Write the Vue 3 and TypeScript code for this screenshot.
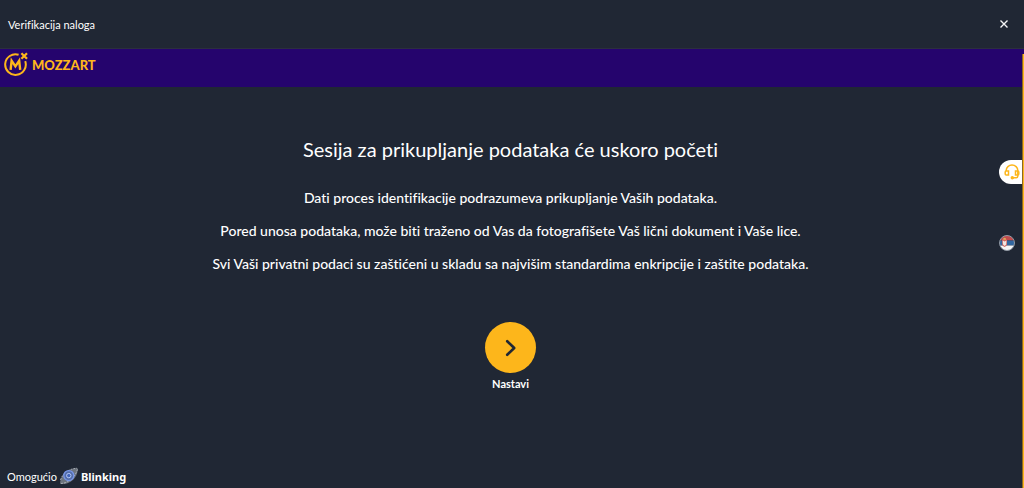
<script setup lang="ts">
const paragraphs: string[] = [
  'Dati proces identifikacije podrazumeva prikupljanje Vaših podataka.',
  'Pored unosa podataka, može biti traženo od Vas da fotografišete Vaš lični dokument i Vaše lice.',
  'Svi Vaši privatni podaci su zaštićeni u skladu sa najvišim standardima enkripcije i zaštite podataka.',
]
</script>

<template>
  <div class="page">
    <header class="topbar">
      <span>Verifikacija naloga</span>
      <button class="close" type="button" aria-label="Zatvori">
        <svg width="10" height="10" viewBox="0 0 10 10"><path d="M1.5 1.5 8.5 8.5M8.5 1.5 1.5 8.5" fill="none" stroke="#f4f5f6" stroke-width="1.4" /></svg>
      </button>
    </header>

    <div class="brand">
      <svg width="24" height="25" viewBox="0 0 24 25" fill="none" stroke="#fdb61b">
        <path d="M14.6 2.8A10.3 10.3 0 1 0 21.2 9.2" stroke-width="2" />
        <path d="M6.6 17.8 7.6 8.6 11.4 14.4 15.2 8.6 16.2 17.8" stroke-width="2.4" />
        <path d="M17.4 1.2 23 6.8M23 1.2 17.4 6.8" stroke-width="2.3" />
      </svg>
      <span class="wordmark">MOZZART</span>
    </div>

    <main class="content">
      <h1>Sesija za prikupljanje podataka će uskoro početi</h1>
      <p v-for="text in paragraphs" :key="text">{{ text }}</p>
      <button class="next" type="button">
        <span class="circle">
          <svg width="12" height="18" viewBox="0 0 12 18"><path d="M2.2 2.2 9.2 9 2.2 15.8" fill="none" stroke="#202734" stroke-width="2.6" stroke-linecap="round" stroke-linejoin="round" /></svg>
        </span>
        <span>Nastavi</span>
      </button>
    </main>

    <footer class="footer">
      <span>Omogućio</span>
      <svg width="20" height="18" viewBox="0 0 20 18">
        <path d="M1 16.8C1 10 6 2.5 18.5 1 19.5 7 15 15 6 17Z" fill="#6d747e" />
        <path d="M1.5 13C4 6 9 2 18 1.2M2 16.5C9 16 16 11 18.6 2" fill="none" stroke="#a7adb4" stroke-width="1" stroke-dasharray="2 1" />
        <circle cx="9.8" cy="8.6" r="5" fill="#536da9" stroke="#7795e8" stroke-width="1.3" />
        <circle cx="9.8" cy="8.6" r="2.2" fill="#4265bc" stroke="#b6c7f4" stroke-width="1" />
      </svg>
      <strong>Blinking</strong>
    </footer>

    <button class="support" type="button" aria-label="Podrška">
      <svg width="16" height="16" viewBox="0 0 16 16" fill="none" stroke="#fdb61b" stroke-width="1.5">
        <path d="M2.2 7V6.5a5.8 5.5 0 0 1 11.6 0V12.2a1.6 1.6 0 0 1-1.6 1.5H9" />
        <path d="M4.5 7H2.2a1 1 0 0 0-1 1v2a1 1 0 0 0 1 1H4.5ZM11.5 7h2.3a1 1 0 0 1 1 1v2a1 1 0 0 1-1 1H11.5Z" />
        <circle cx="8.3" cy="13.8" r="1" fill="#fdb61b" />
      </svg>
    </button>
    <button class="language" type="button" aria-label="Srpski">
      <svg width="16" height="16" viewBox="0 0 16 16">
        <defs><clipPath id="flag"><circle cx="8" cy="8" r="7.4" /></clipPath></defs>
        <g clip-path="url(#flag)">
          <path d="M0 0H16V5.4H0Z" fill="#c34c4d" />
          <path d="M0 5.4H16V10.6H0Z" fill="#31669f" />
          <path d="M0 10.6H16V16H0Z" fill="#f5f5f5" />
          <path d="M3.2 4.6H8V9.5Q7.6 11.2 5.6 12 3.6 11.2 3.2 9.5Z" fill="#d4665f" />
          <path d="M3.7 5.6 5.6 6.6 7.5 5.6 7.2 9.6 5.6 11 4 9.6Z" fill="#f1e7e2" />
          <path d="M4.2 4.8V3L5 3.6 5.6 2.6 6.2 3.6 7 3V4.8Z" fill="#dfb05a" />
        </g>
        <circle cx="8" cy="8" r="7.5" fill="none" stroke="#929aa5" />
      </svg>
    </button>
    <div class="edge"></div>
  </div>
</template>

<style>
body {
  margin: 0;
  background: #202734;
}
</style>

<style scoped>
.page {
  position: relative;
  display: flex;
  flex-direction: column;
  min-height: 100vh;
  background: #202734;
  color: #fff;
  font-family: Lato, "Liberation Sans", sans-serif;
  font-size: 14px;
  font-variant-ligatures: none;
}
button {
  border: 0;
  padding: 0;
  background: none;
  color: inherit;
  font: inherit;
  cursor: pointer;
}
svg {
  display: block;
}
.topbar {
  display: flex;
  align-items: center;
  justify-content: space-between;
  height: 48px;
  padding: 0 15px 0 8px;
  border-bottom: 1px solid #2b2f3d;
  font-size: 11px;
}
.brand {
  display: flex;
  align-items: flex-start;
  gap: 4px;
  box-sizing: border-box;
  height: 38px;
  padding: 3px 4px;
  background: #25046d;
  color: #fdb61b;
}
.wordmark {
  font-size: 13px;
  font-weight: 900;
  line-height: 26px;
}
.content {
  display: flex;
  flex: 1;
  flex-direction: column;
  align-items: center;
  padding: 47px 18px 16px 15px;
  text-align: center;
}
h1 {
  margin: 0 0 24px;
  font-size: 20px;
  font-weight: 400;
  line-height: 30px;
}
p {
  margin: 0 0 13px;
  font-size: 14px;
  font-weight: 500;
  line-height: 20px;
}
.next {
  display: flex;
  flex-direction: column;
  align-items: center;
  gap: 3px;
  margin-top: 35px;
  font-size: 11px;
  font-weight: 700;
  line-height: 16px;
}
.circle {
  display: grid;
  place-items: center;
  width: 51px;
  height: 51px;
  border-radius: 50%;
  background: #fdb61b;
}
.footer {
  display: flex;
  align-items: center;
  gap: 2px;
  padding: 0 7px 3px;
  font-size: 11px;
}
.footer strong {
  font-family: "Noto Sans", sans-serif;
  font-size: 11px;
  font-weight: 700;
}
.support {
  position: absolute;
  top: 160px;
  right: 0;
  width: 25px;
  height: 24px;
  padding-left: 5px;
  border-radius: 12px 0 0 12px;
  background: #fff;
}
.language {
  position: absolute;
  top: 235px;
  right: 9px;
}
.edge {
  position: absolute;
  top: 54px;
  right: 0;
  bottom: 0;
  width: 1px;
  border-left: 1px solid #8b6824;
  background: #fdb61b;
}
</style>
